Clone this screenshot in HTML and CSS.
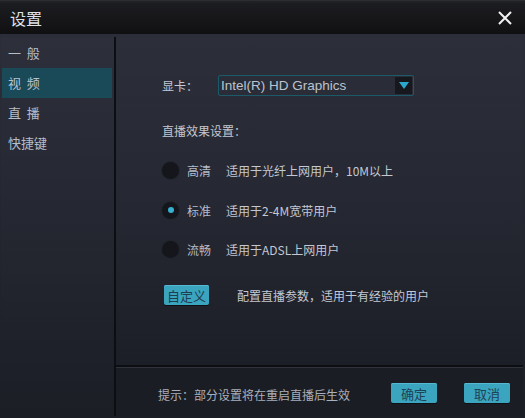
FILE: index.html
```html
<!DOCTYPE html>
<html>
<head>
<meta charset="utf-8">
<link rel="stylesheet" href="styles.css">
</head>
<body>
<div class="window">
  <div class="titlebar">
    <span class="title">设置</span>
    <svg class="close" width="16" height="16" viewBox="0 0 16 16"><path d="M2 2 L14 14 M14 2 L2 14" stroke="#f2f2f2" stroke-width="2" fill="none"/></svg>
  </div>
  <div class="body">
    <div class="sidebar">
      <div class="nav-item">一&nbsp;&nbsp;般</div>
      <div class="nav-item active">视&nbsp;&nbsp;频</div>
      <div class="nav-item">直&nbsp;&nbsp;播</div>
      <div class="nav-item">快捷键</div>
    </div>
    <div class="main">
      <div class="content">
        <div class="row-card">
          <span class="label">显卡：</span>
          <div class="combo">
            <span class="combo-text">Intel(R) HD Graphics</span>
            <span class="combo-btn"><svg width="10" height="7" viewBox="0 0 10 7"><path d="M0 0 H10 L5 7 Z" fill="#2aa9cb"/></svg></span>
          </div>
        </div>
        <div class="heading">直播效果设置：</div>
        <div class="radio-row r1"><span class="radio"></span><span class="rlabel">高清</span><span class="rdesc">适用于光纤上网用户，10M以上</span></div>
        <div class="radio-row r2"><span class="radio on"></span><span class="rlabel">标准</span><span class="rdesc">适用于2-4M宽带用户</span></div>
        <div class="radio-row r3"><span class="radio"></span><span class="rlabel">流畅</span><span class="rdesc">适用于ADSL上网用户</span></div>
        <div class="custom-row"><span class="btn custom">自定义</span><span class="cdesc">配置直播参数，适用于有经验的用户</span></div>
      </div>
      <div class="footer">
        <span class="hint">提示：部分设置将在重启直播后生效</span>
        <span class="btn ok">确定</span>
        <span class="btn cancel">取消</span>
      </div>
    </div>
  </div>
</div>
</body>
</html>
```
FILE: styles.css
```css
* { box-sizing: border-box; }
html, body { margin: 0; padding: 0; background: #141519; }
body { font-family: "Liberation Sans", "Noto Sans CJK SC", sans-serif; }
.window {
  width: 525px; height: 418px;
  display: flex; flex-direction: column;
  background: #15161a;
}
.titlebar {
  height: 34px;
  flex: none;
  display: flex; align-items: center; justify-content: space-between;
  background: linear-gradient(#222327 0, #1b1c20 3px, #161619 60%, #101012 100%);
  border-top: 1px solid #2c2d31;
  padding: 0 12px 0 10px;
}
.title { color: #dde2ea; font-size: 16px; font-family: "Noto Sans CJK SC", sans-serif; line-height: 16px; }
.close { display: block; margin-top: 1px; }
.body {
  flex: 1;
  display: flex;
  padding: 3px 2px 2px 1px;
  background: linear-gradient(#2b2e38, #1c1e26);
}
.sidebar {
  width: 115px;
  flex: none;
  padding: 1px 2px 0 1px;
  border-right: 2px solid #0d0e11;
  background: linear-gradient(#2d2f3a 0, #262833 40%, #1c1e26 100%);
  font-family: "Noto Sans CJK SC", sans-serif;
}
.nav-item {
  height: 30px;
  line-height: 30px;
  padding-left: 6px;
  font-size: 13px;
  color: #b6bdca;
}
.active { background: #1a4957; color: #b9c3cf; }
.main {
  flex: 1;
  display: flex; flex-direction: column;
  background: linear-gradient(#2c2f3a 0, #262833 40%, #1d1f28 85%);
}
.content {
  flex: 1;
  padding: 38px 0 0 46px;
  font-family: "Noto Sans CJK SC", sans-serif;
  font-size: 12px;
  color: #c3c8d2;
}
.row-card { display: flex; align-items: center; height: 21px; }
.label { width: 56px; font-size: 12px; color: #c3c8d2; }
.combo {
  width: 196px; height: 21px;
  border: 1px solid #1b5b69;
  border-radius: 2px;
  display: flex; align-items: center; justify-content: space-between;
  padding: 0 1px 0 2px;
  background: #2a2d37;
}
.combo-text { font-family: "Liberation Sans", sans-serif; font-size: 13.5px; color: #bcc3cf; }
.combo-btn {
  width: 17px; height: 17px;
  background: #17181d;
  display: flex; align-items: center; justify-content: center;
}
.combo-btn svg { display: block; }
.heading { margin-top: 25px; height: 20px; line-height: 20px; }
.radio-row { display: flex; align-items: center; height: 20px; }
.r1 { margin-top: 19px; }
.r2 { margin-top: 20px; }
.r3 { margin-top: 19px; }
.radio {
  width: 17px; height: 17px; border-radius: 50%;
  background: #14161c;
  box-shadow: 0 0 0 1px #22252d;
  margin-left: 0;
  display: flex; align-items: center; justify-content: center;
}
.radio.on::after {
  content: ""; width: 6px; height: 6px; border-radius: 50%; background: #38b0d2;
}
.rlabel { margin-left: 8px; width: 39px; color: #b4bccb; }
.rdesc { color: #c3c8d2; }
.custom-row { display: flex; align-items: center; height: 20px; margin-top: 26px; }
.btn {
  display: inline-flex; align-items: center; justify-content: center;
  height: 20px;
  border-radius: 2px;
  background: #3ba4bf;
  color: #1d3e50;
  font-family: "Noto Sans CJK SC", sans-serif;
  box-shadow: inset 0 1px 0 #56b9d2, 0 1px 0 #0f1116;
}
.custom { width: 45px; margin-left: 2px; font-size: 13px; }
.cdesc { margin-left: 28px; color: #c3c8d2; }
.footer {
  height: 51px;
  flex: none;
  border-top: 2px solid #0d0e11;
  box-shadow: inset 0 1px 0 #30333c;
  display: flex; align-items: center;
  padding: 3px 13px 0 42px;
  background: #1b1d24;
}
.hint { font-family: "Noto Sans CJK SC", sans-serif; font-size: 12px; color: #a9afbb; flex: 1; margin-top: 3px; }
.ok, .cancel { width: 46px; font-size: 13px; color: #1d4356; }
.cancel { margin-left: 27px; }
```
